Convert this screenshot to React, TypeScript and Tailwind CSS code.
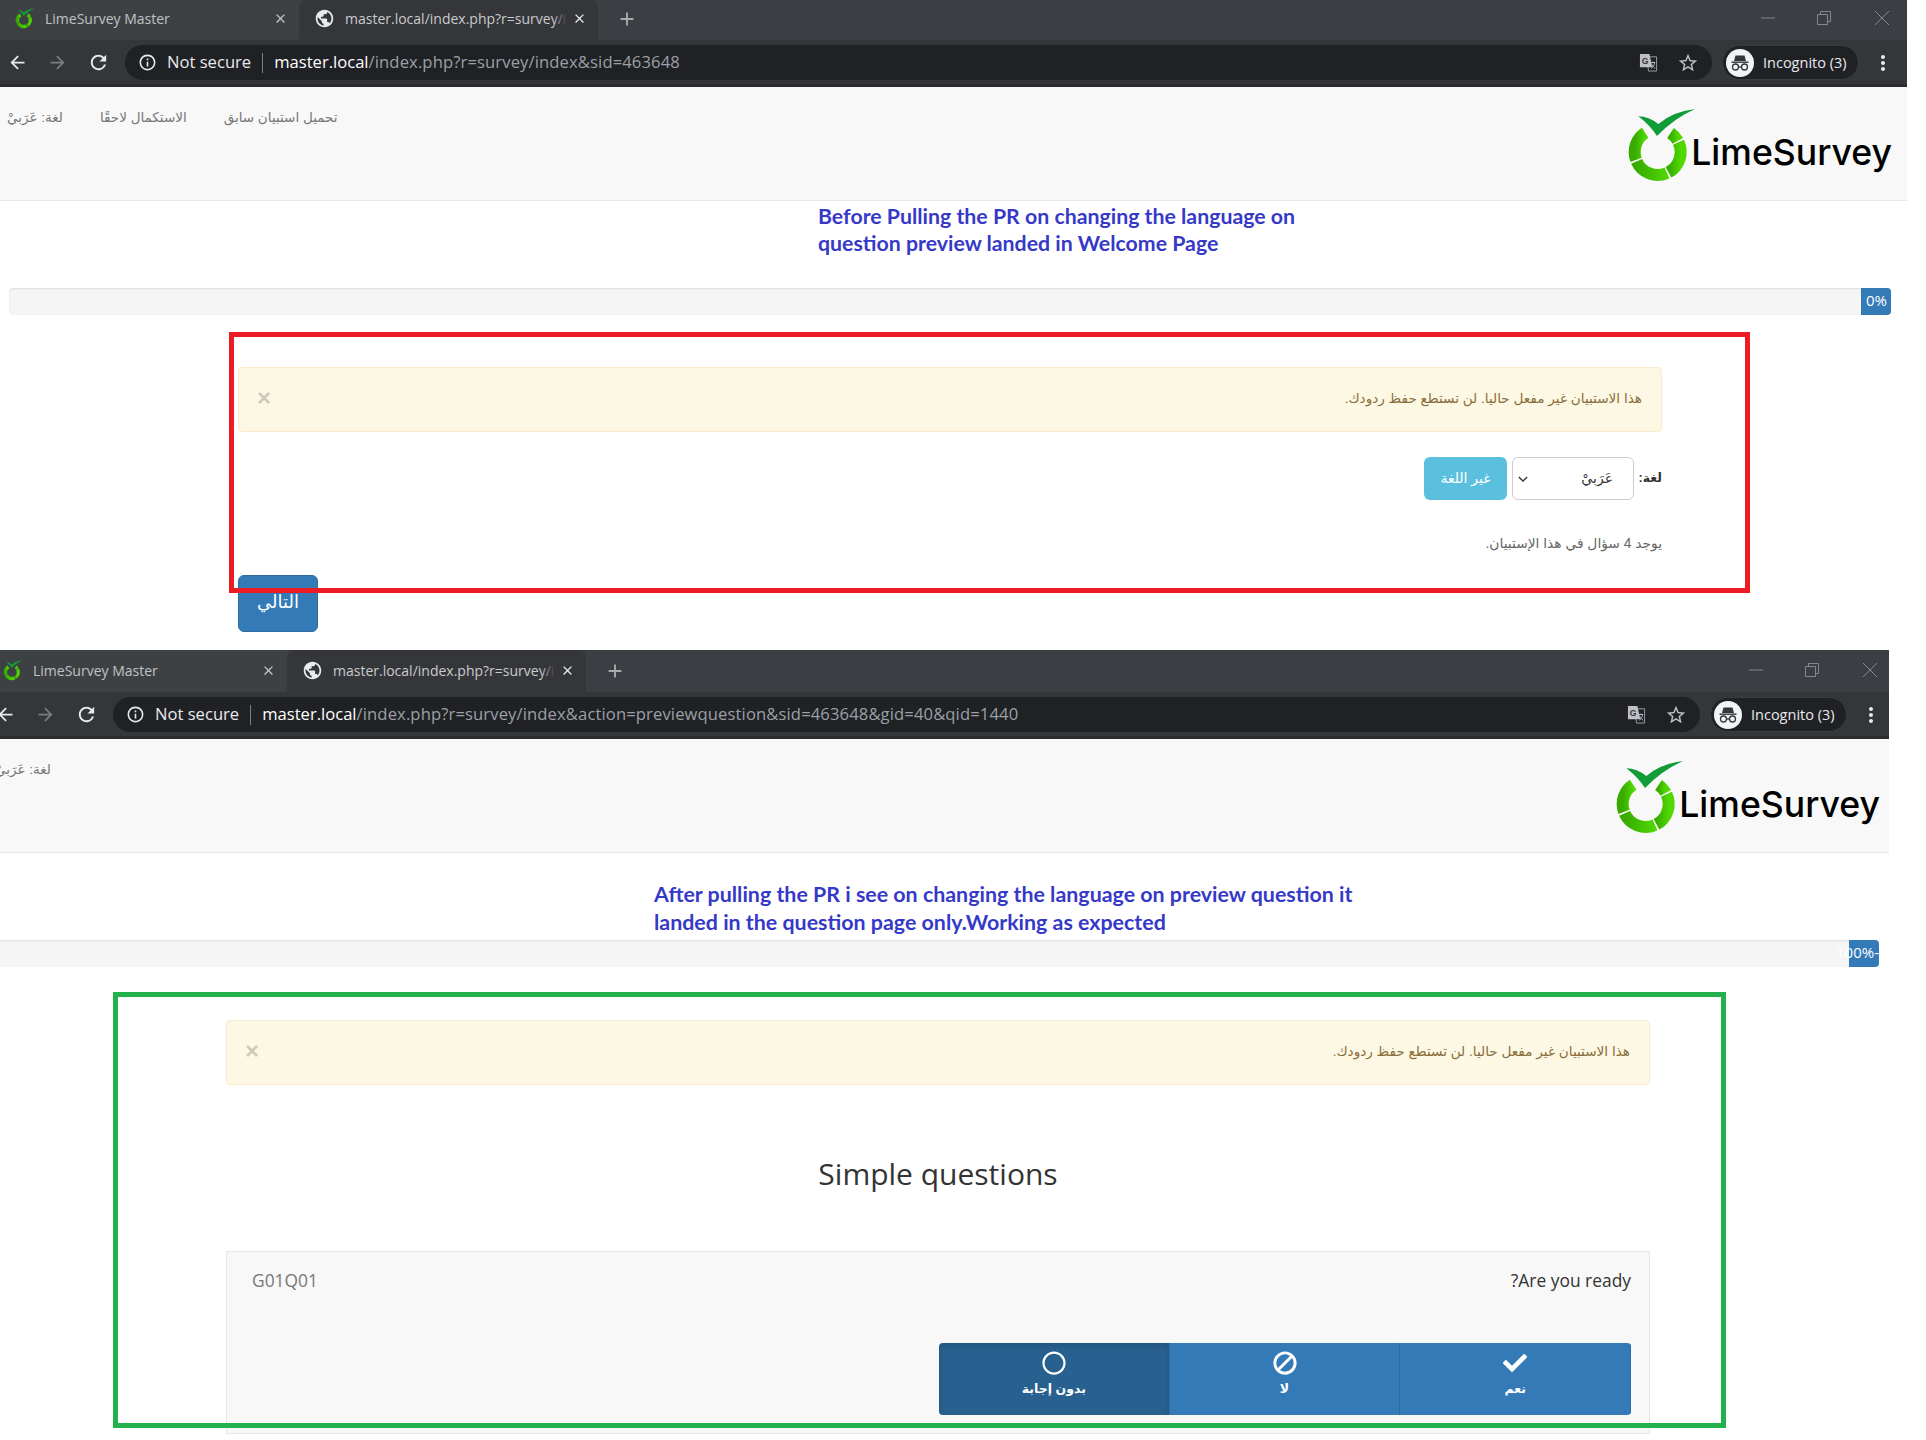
import { FaBan, FaCheck, FaRegCircle } from "react-icons/fa";
import { MdAdd, MdArrowBack, MdArrowForward, MdClose, MdInfoOutline, MdMoreVert, MdPublic, MdRefresh, MdStarBorder } from "react-icons/md";

const UI = "font-['Open_Sans',sans-serif]";
const AR = "font-['Liberation_Sans','DejaVu_Sans',sans-serif]";

function polar(r: number, deg: number) {
  const a = (deg * Math.PI) / 180;
  return `${476 + r * Math.sin(a)} ${456 - r * Math.cos(a)}`;
}

function LimeMark({ className, id }: { className: string; id: string }) {
  const segments = [
    [34, 61],
    [65, 152],
    [156, 246],
    [250, 327],
  ];
  return (
    <svg viewBox="384 324 210 228" className={className}>
      <defs>
        <linearGradient id={id} x1="0" x2="1" y1="0" y2="0">
          <stop offset="0" stopColor="#37ab00" />
          <stop offset="1" stopColor="#50d800" />
        </linearGradient>
      </defs>
      {segments.map(([from, to]) => (
        <path
          key={from}
          d={`M${polar(69, from)} A69 69 0 0 1 ${polar(69, to)}`}
          fill="none"
          stroke={`url(#${id})`}
          strokeWidth="36"
        />
      ))}
      <path d="M418 349 Q450 350 478 372 Q520 335 588 327 Q525 355 474 408 Q452 375 418 349 Z" fill="#129c38" />
    </svg>
  );
}

function TranslateIcon() {
  return (
    <svg viewBox="0 0 20 20" className="h-[19px] w-[19px]">
      <path d="M8 4h10.500v15H10z" fill="none" stroke="#9aa0a6" strokeWidth="1" />
      <path d="M1 1h10l3 14H1z" fill="#bdc1c6" />
      <text x="3" y="11.500" fontSize="9" fontWeight="700" fill="#35363a" fontFamily="Liberation Sans">G</text>
      <path d="M12 10h5M14.500 9v1.500M13 16c2.500-1.500 3-3.500 3.300-5.500M13.500 12c.8 1.500 1.800 3 3.500 4" fill="none" stroke="#bdc1c6" strokeWidth="1" />
    </svg>
  );
}

function IncognitoIcon() {
  return (
    <svg viewBox="0 0 28 28" className="h-7 w-7">
      <circle cx="14" cy="14" r="14" fill="#f1f3f4" />
      <path d="M9.500 6.500h9l1.500 5.500H8z" fill="#35363a" />
      <rect x="5.500" y="12.500" width="17" height="1.400" fill="#35363a" />
      <circle cx="9.500" cy="18" r="3" fill="none" stroke="#35363a" strokeWidth="1.300" />
      <circle cx="18.500" cy="18" r="3" fill="none" stroke="#35363a" strokeWidth="1.300" />
      <path d="M12.500 18h3" stroke="#35363a" strokeWidth="1.300" />
    </svg>
  );
}

function WindowControls() {
  return (
    <div className="flex items-center pr-[18px]">
      <svg viewBox="0 0 14 14" className="mr-[42px] h-[14px] w-[14px]"><path d="M0 7h14" stroke="#85888b" /></svg>
      <svg viewBox="0 0 14 14" className="mr-[44px] h-[14px] w-[14px]"><path d="M.5 3.500h10v10H.5zM3.500 3.500V.5h10v10h-3" fill="none" stroke="#85888b" /></svg>
      <svg viewBox="0 0 14 14" className="h-[14px] w-[14px]"><path d="M0 0l14 14M14 0L0 14" stroke="#85888b" /></svg>
    </div>
  );
}

function BrowserChrome({ tall, path }: { tall?: boolean; path: string }) {
  return (
    <div className={`${UI} text-[#e8eaed]`}>
      <div className={`flex items-end justify-between bg-[#3b3e42] ${tall ? "h-[42px]" : "h-[40px]"}`}>
        <div className="flex h-full items-center">
          <div className={`flex h-full w-[299px] items-center rounded-br-lg bg-[#3e4144] pl-[15px] pr-[11px] ${tall ? "pb-[1px]" : "pb-[3px]"}`}>
            <LimeMark id={tall ? "tab-lime-b" : "tab-lime-a"} className="h-[21px] w-[20px] shrink-0" />
            <span className="ml-[10px] flex-1 text-[14px] text-[#bfc2c5]">LimeSurvey Master</span>
            <MdClose className="h-[15px] w-[15px] text-[#c4c7ca]" />
          </div>
          <div className={`flex h-full w-[299px] items-center rounded-t-lg bg-[#35363a] pl-[15px] pr-[11px] ${tall ? "pb-[1px]" : "pb-[3px]"}`}>
            <MdPublic className="h-[21px] w-[21px] shrink-0 text-[#e8eaed]" />
            <div className="relative ml-[10px] w-[222px] overflow-hidden whitespace-nowrap text-[14px] text-[#c9cbce]">
              master.local/index.php?r=survey/index
              <div className="absolute inset-y-0 right-0 w-[14px] bg-gradient-to-r from-transparent to-[#35363a]" />
            </div>
            <MdClose className="ml-auto h-[15px] w-[15px] text-[#e8eaed]" />
          </div>
          <MdAdd className={`ml-[18px] h-[22px] w-[22px] text-[#a9acaf] ${tall ? "mb-[1px]" : "mb-[3px]"}`} />
        </div>
        <div className={tall ? "self-center pb-[3px]" : "self-center pb-[5px]"}>
          <WindowControls />
        </div>
      </div>
      <div className="flex h-[47px] items-start bg-[#35363a] pt-[5px] shadow-[inset_0_-3px_0_#2b2c2f]">
        <div className="flex h-[35px] w-[125px] items-center">
          <MdArrowBack className="ml-[7px] h-[21px] w-[21px] text-[#e8eaed]" />
          <MdArrowForward className="ml-[19px] h-[21px] w-[21px] text-[#7a7d80]" />
          <MdRefresh className="ml-[19px] h-[23px] w-[23px] text-[#e8eaed]" />
        </div>
        <div className="flex h-[35px] w-[1587px] items-center rounded-full bg-[#202124] pl-[13px] pr-[13px] text-[16.600px]">
          <MdInfoOutline className="h-[19px] w-[19px] text-[#e8eaed]" />
          <span className="ml-[10px]">Not secure</span>
          <span className="mx-[11px] h-[20px] w-px bg-[#7e8083]" />
          <span className="text-white">master.local</span>
          <span className="tracking-[0.12px] text-[#9aa0a6]">{path}</span>
          <div className="ml-auto flex items-center gap-[19px]">
            <TranslateIcon />
            <MdStarBorder className="h-[22px] w-[22px] text-[#bdc1c6]" />
          </div>
        </div>
        <div className="ml-[10px] flex h-[35px] w-[137px] items-center rounded-full border border-[#3c3d41] bg-[#202124] pl-[3px] text-[14.500px]">
          <IncognitoIcon />
          <span className="ml-[9px]">Incognito (3)</span>
        </div>
        <MdMoreVert className="ml-[12px] mt-[6px] h-[24px] w-[24px] text-[#e8eaed]" />
      </div>
    </div>
  );
}

function SurveyHeader({ links, id }: { links: string[]; id: string }) {
  return (
    <div className="flex h-[114px] justify-between border-b border-[#e7e7e7] bg-[#f8f8f8] pr-[15px]">
      <div className={`${AR} flex items-start gap-[37px] pl-[7px] pt-[21px] text-[13.500px] text-[#777]`}>
        {links.map((l) => (
          <span key={l}>{l}</span>
        ))}
      </div>
      <div className="flex items-start pt-[21px]">
        <LimeMark id={id} className="h-[76px] w-[70px]" />
        <span className="-ml-[6px] mt-[20px] font-['Inter',sans-serif] text-[35.600px] font-medium leading-[50px] text-black">LimeSurvey</span>
      </div>
    </div>
  );
}

function ProgressBar({ label, wide }: { label: string; wide?: boolean }) {
  return (
    <div className="ml-[9px] flex h-[27px] w-[1882px] justify-end rounded bg-[#f5f5f5] shadow-[inset_0_1px_2px_rgba(0,0,0,0.1)]">
      <div className={`${UI} flex w-[30px] justify-end whitespace-nowrap rounded-r bg-[#337ab7] pb-[2px] text-[15px] leading-[24px] text-white ${wide ? "pr-0" : "pr-[4px]"}`}>
        {label}
      </div>
    </div>
  );
}

function Notice() {
  return (
    <div className="flex h-[65px] items-center justify-between rounded border border-[#faebcc] bg-[#fcf8e3] pl-[18px] pr-[19px]">
      <span className="pb-[3px] font-['Liberation_Sans',sans-serif] text-[24px] font-bold leading-none text-black/20">×</span>
      <span dir="rtl" className={`${AR} text-[13.600px] text-[#8a6d3b]`}>هذا الاستبيان غير مفعل حاليا. لن تستطع حفظ ردودك.</span>
    </div>
  );
}

function AnswerButton({ icon, label, active }: { icon: React.ReactNode; label: string; active?: boolean }) {
  return (
    <div className={`flex flex-1 flex-col items-center border-r border-[#2e6da4] pt-[8px] text-white ${active ? "bg-[#286090] shadow-[inset_0_3px_5px_rgba(0,0,0,0.125)]" : "bg-[#337ab7]"}`}>
      {icon}
      <span className={`${AR} mt-[5px] text-[12.500px] font-bold`}>{label}</span>
    </div>
  );
}

export default function App() {
  return (
    <div className="h-[1440px] w-[1926px] overflow-hidden bg-white">
      {/* before */}
      <div className="h-[650px] w-[1907px]">
        <BrowserChrome path="/index.php?r=survey/index&sid=463648" />
        <SurveyHeader id="logo-a" links={["لغة: عَرَبيْ", "الاستكمال لاحقًا", "تحميل استبيان سابق"]} />
        <div className="relative">
          <p className="pl-[818px] pt-[2px] font-['Lato',sans-serif] text-[21.300px] font-bold leading-[27px] text-[#3639c8]">
            Before Pulling the PR on changing the language on
            <br />
            question preview landed in Welcome Page
          </p>
          <div className="mt-[31px]">
            <ProgressBar label="0%" />
          </div>
          <div className="ml-[238px] mt-[52px] flex w-[1424px] flex-col">
            <Notice />
            <div dir="rtl" className={`${AR} mt-[25px] flex h-[43px] items-center text-[14px] text-[#333]`}>
              <b className="w-[28px] text-[12.500px]">لغة:</b>
              <div className="flex h-[43px] w-[122px] items-center justify-between rounded-md border border-[#ccc] bg-white pl-[5px] pr-[20px]">
                <span>عَرَبيْ</span>
                <svg viewBox="0 0 12 8" className="h-[8px] w-[10px]"><path d="M1 1.500l5 5 5-5" fill="none" stroke="#333" strokeWidth="1.600" /></svg>
              </div>
              <div className="mr-[5px] flex h-[43px] w-[83px] items-center justify-center rounded-md bg-[#5bc0de] text-white">غير اللغة</div>
            </div>
            <p dir="rtl" className={`${AR} mt-[35px] text-[13.800px] leading-[18px] text-[#666]`}>يوجد 4 سؤال في هذا الإستبيان.</p>
            <div className="mt-[22px] flex h-[57px] w-[80px] items-center justify-center rounded-md border border-[#2e6da4] bg-[#337ab7] pb-[2px]">
              <span className={`${AR} text-[18px] text-white`}>التالي</span>
            </div>
          </div>
          <div className="absolute left-[229px] top-[131px] h-[261px] w-[1521px] border-[5px] border-[#ed1c24]" />
        </div>
      </div>

      {/* after */}
      <div className="h-[790px] w-[1889px] overflow-hidden">
        <div className="-ml-3 w-[1907px]">
          <BrowserChrome tall path="/index.php?r=survey/index&action=previewquestion&sid=463648&gid=40&qid=1440" />
          <SurveyHeader id="logo-b" links={["لغة: عَرَبيْ"]} />
          <div className="relative">
            <p className="pl-[666px] pt-[27px] font-['Lato',sans-serif] text-[21.400px] font-bold leading-[28px] text-[#3639c8]">
              After pulling the PR i see on changing the language on preview question it
              <br />
              landed in the question page only.Working as expected
            </p>
            <div className="mt-[4px]">
              <ProgressBar wide label="100%-" />
            </div>
            <div className="ml-[238px] mt-[53px] w-[1424px]">
              <Notice />
              <h2 className={`${UI} mt-[67px] text-center text-[30px] leading-[44px] text-[#333]`}>Simple questions</h2>
              <div className="mt-[55px] h-[183px] border border-[#e7e7e7] bg-[#f8f8f8] pl-[19px] pr-[18px] pt-[16px]">
                <div className={`${UI} flex justify-between text-[17.400px] leading-[24px]`}>
                  <span className="pl-[6px] text-[#777]">G01Q01</span>
                  <span className="text-[#333]">?Are you ready</span>
                </div>
                <div className="ml-[693px] mt-[51px] flex h-[72px] w-[692px] overflow-hidden rounded">
                  <AnswerButton active icon={<FaRegCircle className="h-[24px] w-[24px]" />} label="بدون إجابة" />
                  <AnswerButton icon={<FaBan className="h-[24px] w-[24px] -scale-x-100" />} label="لا" />
                  <AnswerButton icon={<FaCheck className="h-[24px] w-[24px]" />} label="نعم" />
                </div>
              </div>
            </div>
            <div className="absolute left-[125px] top-[139px] h-[436px] w-[1613px] border-[5px] border-[#22b14c]" />
          </div>
        </div>
      </div>
    </div>
  );
}
